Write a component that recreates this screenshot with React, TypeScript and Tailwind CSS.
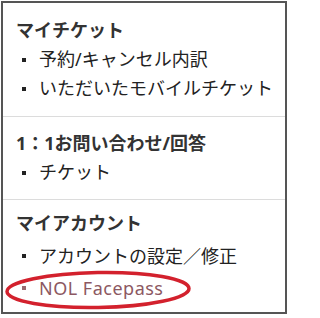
// ============================================================
// My Page menu (マイチケット / お問い合わせ / マイアカウント)
// ============================================================

interface MenuSection {
  title: string
  items: { label: string; highlight?: boolean }[]
  pad: string
  itemClass: string
}

const sections: MenuSection[] = [
  {
    title: 'マイチケット',
    items: [{ label: '予約/キャンセル内訳' }, { label: 'いただいたモバイルチケット' }],
    pad: 'pt-[12px] pb-[13px] border-b border-[#dcdcdc]',
    itemClass: 'leading-[29px]',
  },
  {
    title: '1：1お問い合わせ/回答',
    items: [{ label: 'チケット' }],
    pad: 'pt-[11px] pb-[12px] border-b border-[#dcdcdc]',
    itemClass: 'leading-[29px]',
  },
  {
    title: 'マイアカウント',
    items: [{ label: 'アカウントの設定／修正' }, { label: 'NOL Facepass', highlight: true }],
    pad: 'pt-[8px] pb-[8px]',
    itemClass: 'leading-[32px] first:mt-[2px]',
  },
]

export default function App() {
  return (
    <div className="w-[291px] h-[318px] bg-white pt-px pl-px font-['Noto_Sans','Noto_Sans_CJK_JP',sans-serif]">
      <div className="relative w-[286px] border-2 border-[#555]">
        {sections.map(section => (
          <section key={section.title} className={section.pad}>
            <h2 className="pl-[13px] text-[18px] leading-[30px] font-bold text-[#333]">{section.title}</h2>
            <ul>
              {section.items.map(item => (
                <li
                  key={item.label}
                  className={`flex items-center pl-[19px] text-[18px] ${section.itemClass} ${
                    item.highlight ? 'text-[#8c5862] tracking-[0.5px]' : 'text-[#222]'
                  }`}
                >
                  <span className={`w-[4px] h-[4px] mr-[13px] shrink-0 ${item.highlight ? 'bg-[#9a6a70]' : 'bg-[#222]'}`} />
                  {item.label}
                </li>
              ))}
            </ul>
          </section>
        ))}

        {/* Red hand-drawn annotation around NOL Facepass */}
        <svg className="absolute left-0 top-0 pointer-events-none" width="286" height="314" viewBox="0 0 286 314">
          <ellipse cx="95" cy="287" rx="91" ry="17.5" fill="none" stroke="#d3212d" strokeWidth="3.5" transform="rotate(-1 95 287)" />
        </svg>
      </div>
    </div>
  )
}
